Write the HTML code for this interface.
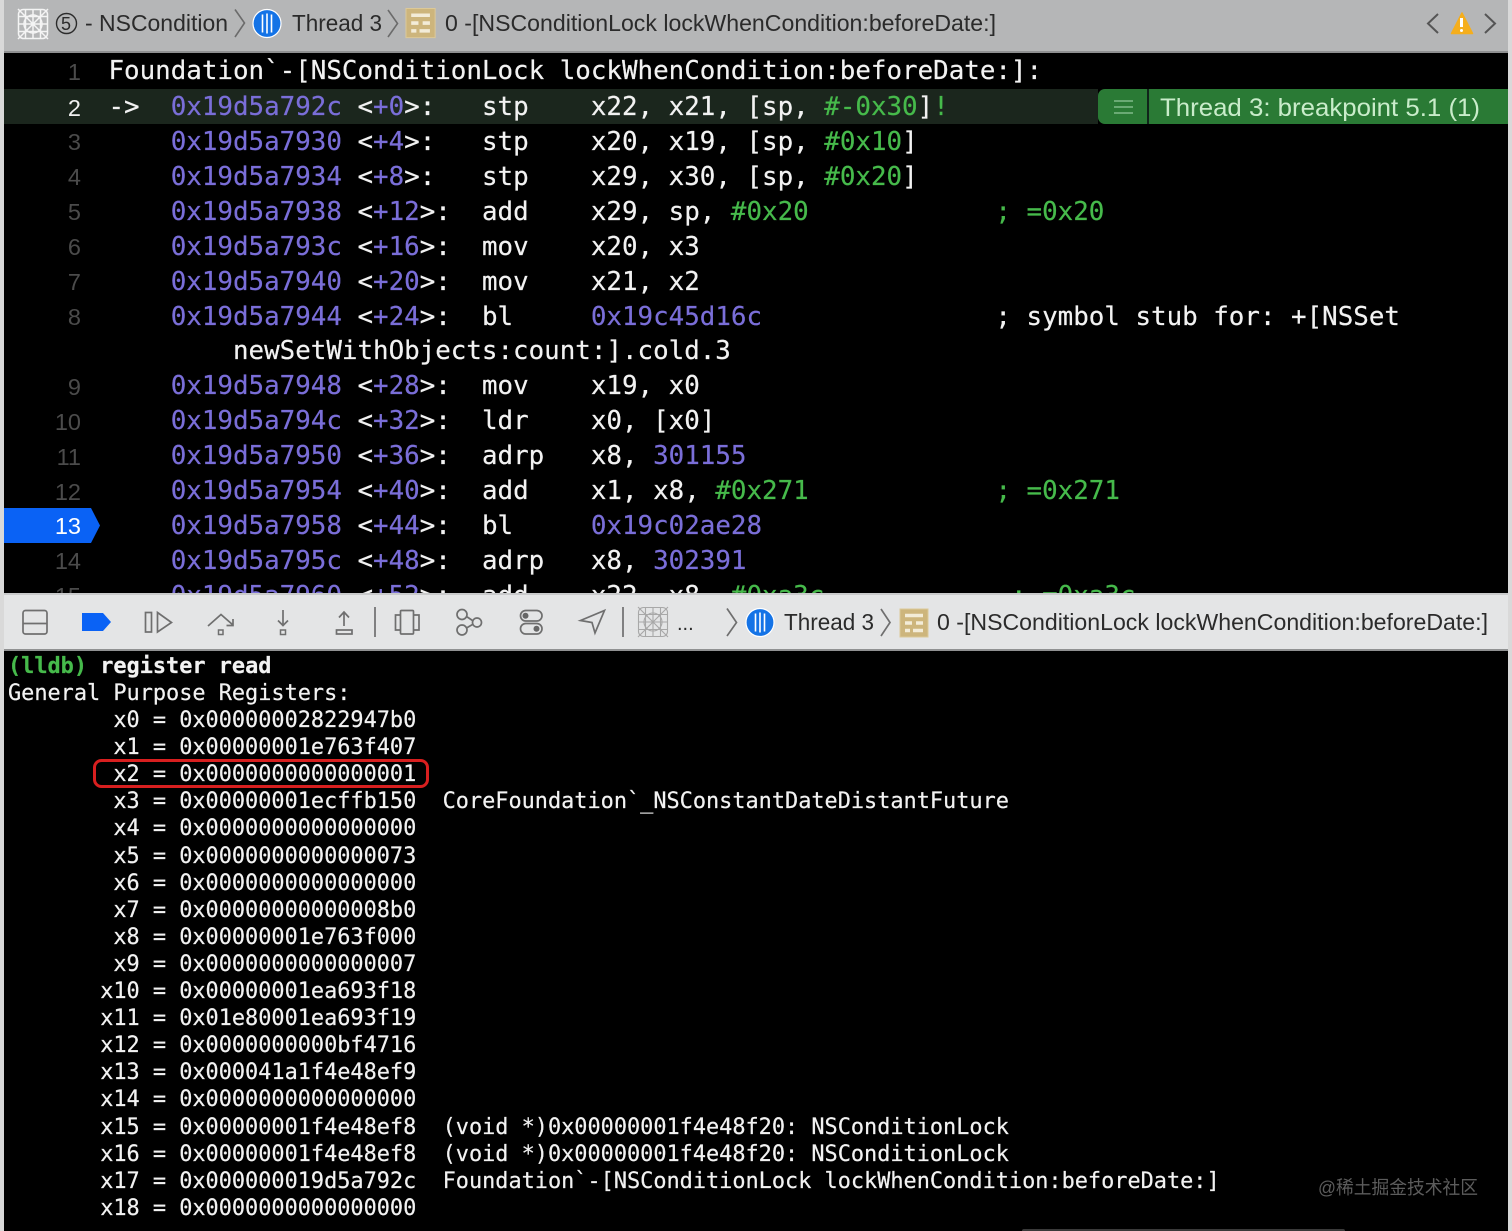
<!DOCTYPE html>
<html><head><meta charset="utf-8"><style>
html,body{margin:0;padding:0;background:#000}
#p{position:relative;width:1512px;height:1231px;overflow:hidden;background:#000}
.c{position:absolute;white-space:pre;font-family:"DejaVu Sans Mono","Liberation Mono",monospace;color:#f2f2f2;-webkit-text-stroke:.2px currentColor}
.d{left:108.5px;font-size:25.85px;line-height:34px;height:34px}
.t{left:8px;font-size:21.89px;line-height:27px;height:27px}
.n{position:absolute;width:81px;left:0;text-align:right;font:23.5px/34px "Liberation Sans",sans-serif;color:#4b4b4b}
i{font-style:normal}
.a{color:#7a6ed8}.g{color:#46ba4b}.w{color:#f2f2f2}
b{font-weight:bold}
svg{position:absolute;left:0;top:0}
svg text{font-family:"Liberation Sans","Noto Sans CJK SC",sans-serif}
</style></head><body><div id="p">
<div style="position:absolute;left:0;top:0;width:1512px;height:51px;background:#b5b6b7"></div>
<div style="position:absolute;left:0;top:51px;width:1512px;height:2px;background:#8f9091"></div>
<div style="position:absolute;left:4px;top:89px;width:1094px;height:35px;background:#1b261d"></div>
<div style="position:absolute;left:1098px;top:89px;width:49px;height:35px;background:#2a7a35;border-radius:7px 0 0 7px"></div>
<div style="position:absolute;left:1149px;top:89px;width:359px;height:35px;background:#2a7a35"></div>

<div class="n" style="top:55px">1</div>
<div class="n" style="top:91px;color:#f0f0f0">2</div>
<div class="n" style="top:125px">3</div>
<div class="n" style="top:160px">4</div>
<div class="n" style="top:195px">5</div>
<div class="n" style="top:230px">6</div>
<div class="n" style="top:265px">7</div>
<div class="n" style="top:300px">8</div>
<div class="n" style="top:370px">9</div>
<div class="n" style="top:405px">10</div>
<div class="n" style="top:440px">11</div>
<div class="n" style="top:475px">12</div>
<svg width="110" height="560" style="left:0;top:0"><polygon points="4,508 91,508 100,525.5 91,543 4,543" fill="#0a62f5"/></svg>
<div class="n" style="top:509px;color:#fff">13</div>
<div class="n" style="top:544px">14</div>
<div class="n" style="top:579px">15</div>

<div class="c d" style="top:54px">Foundation`-[NSConditionLock lockWhenCondition:beforeDate:]:</div>
<div class="c d" style="top:90px">-&gt;  <i class="a">0x19d5a792c</i> &lt;<i class="a">+0</i>&gt;:   stp    x22, x21, [sp, <i class="g">#-0x30</i>]<i class="g">!</i></div>
<div class="c d" style="top:125px">    <i class="a">0x19d5a7930</i> &lt;<i class="a">+4</i>&gt;:   stp    x20, x19, [sp, <i class="g">#0x10</i>]</div>
<div class="c d" style="top:160px">    <i class="a">0x19d5a7934</i> &lt;<i class="a">+8</i>&gt;:   stp    x29, x30, [sp, <i class="g">#0x20</i>]</div>
<div class="c d" style="top:195px">    <i class="a">0x19d5a7938</i> &lt;<i class="a">+12</i>&gt;:  add    x29, sp, <i class="g">#0x20</i>            <i class="g">; =0x20</i></div>
<div class="c d" style="top:230px">    <i class="a">0x19d5a793c</i> &lt;<i class="a">+16</i>&gt;:  mov    x20, x3</div>
<div class="c d" style="top:265px">    <i class="a">0x19d5a7940</i> &lt;<i class="a">+20</i>&gt;:  mov    x21, x2</div>
<div class="c d" style="top:300px">    <i class="a">0x19d5a7944</i> &lt;<i class="a">+24</i>&gt;:  bl     <i class="a">0x19c45d16c</i>               ; symbol stub for: +[NSSet</div>
<div class="c d" style="top:334px">        newSetWithObjects:count:].cold.3</div>
<div class="c d" style="top:369px">    <i class="a">0x19d5a7948</i> &lt;<i class="a">+28</i>&gt;:  mov    x19, x0</div>
<div class="c d" style="top:404px">    <i class="a">0x19d5a794c</i> &lt;<i class="a">+32</i>&gt;:  ldr    x0, [x0]</div>
<div class="c d" style="top:439px">    <i class="a">0x19d5a7950</i> &lt;<i class="a">+36</i>&gt;:  adrp   x8, <i class="a">301155</i></div>
<div class="c d" style="top:474px">    <i class="a">0x19d5a7954</i> &lt;<i class="a">+40</i>&gt;:  add    x1, x8, <i class="g">#0x271</i>            <i class="g">; =0x271</i></div>
<div class="c d" style="top:509px">    <i class="a">0x19d5a7958</i> &lt;<i class="a">+44</i>&gt;:  bl     <i class="a">0x19c02ae28</i></div>
<div class="c d" style="top:544px">    <i class="a">0x19d5a795c</i> &lt;<i class="a">+48</i>&gt;:  adrp   x8, <i class="a">302391</i></div>
<div class="c d" style="top:579px">    <i class="a">0x19d5a7960</i> &lt;<i class="a">+52</i>&gt;:  add    x22, x8, <i class="g">#0xa3c</i>            <i class="g">; =0xa3c</i></div>

<div style="position:absolute;left:0;top:593px;width:1512px;height:58px;background:#e4e5e6;border-top:2px solid #c9cacb;box-sizing:border-box;border-bottom:2px solid #909192"></div>

<div class="c t" style="top:653px"><b class="g">(lldb)</b> <b>register read</b></div>
<div class="c t" style="top:680px">General Purpose Registers:</div>
<div class="c t" style="top:707px">        x0 = 0x00000002822947b0</div>
<div class="c t" style="top:734px">        x1 = 0x00000001e763f407</div>
<div class="c t" style="top:761px">        x2 = 0x0000000000000001</div>
<div class="c t" style="top:788px">        x3 = 0x00000001ecffb150  CoreFoundation`_NSConstantDateDistantFuture</div>
<div class="c t" style="top:815px">        x4 = 0x0000000000000000</div>
<div class="c t" style="top:843px">        x5 = 0x0000000000000073</div>
<div class="c t" style="top:870px">        x6 = 0x0000000000000000</div>
<div class="c t" style="top:897px">        x7 = 0x00000000000008b0</div>
<div class="c t" style="top:924px">        x8 = 0x00000001e763f000</div>
<div class="c t" style="top:951px">        x9 = 0x0000000000000007</div>
<div class="c t" style="top:978px">       x10 = 0x00000001ea693f18</div>
<div class="c t" style="top:1005px">       x11 = 0x01e80001ea693f19</div>
<div class="c t" style="top:1032px">       x12 = 0x0000000000bf4716</div>
<div class="c t" style="top:1059px">       x13 = 0x000041a1f4e48ef9</div>
<div class="c t" style="top:1086px">       x14 = 0x0000000000000000</div>
<div class="c t" style="top:1114px">       x15 = 0x00000001f4e48ef8  (void *)0x00000001f4e48f20: NSConditionLock</div>
<div class="c t" style="top:1141px">       x16 = 0x00000001f4e48ef8  (void *)0x00000001f4e48f20: NSConditionLock</div>
<div class="c t" style="top:1168px">       x17 = 0x000000019d5a792c  Foundation`-[NSConditionLock lockWhenCondition:beforeDate:]</div>
<div class="c t" style="top:1195px">       x18 = 0x0000000000000000</div>

<svg width="1512" height="1231" viewBox="0 0 1512 1231">
<defs>
<g id="grid" fill="none">
<rect x="0.5" y="0.5" width="29" height="29" rx="5"/>
<path d="M0 7.5H30M0 15H30M0 22.5H30M7.5 0V30M15 0V30M22.5 0V30M0 0L30 30M30 0L0 30"/>
<circle cx="15" cy="15" r="9"/>
</g>
<g id="th"><circle r="14" fill="#1473e6" stroke="#fff" stroke-width="1.2"/><path d="M-4.5-9V9M0-10V10M4.5-9V9" stroke="#fff" stroke-width="1.6" fill="none"/></g>
<g id="fr"><rect x="0" y="0" width="28" height="28" fill="#cdb57c" stroke="#dcc998"/><path d="M5 6.500H23M5 14H12M16 14H23M5 21.500H10M13 21.500H23" stroke="#f3ecd8" stroke-width="3.400" fill="none"/></g>
</defs>

<use href="#grid" x="18" y="9" stroke="#f4f4f4" stroke-width="1.500"/>
<circle cx="66.500" cy="23.500" r="10" fill="none" stroke="#2b2b2b" stroke-width="1.400"/>
<text x="61" y="30" font-size="18" fill="#2b2b2b">5</text>
<text x="85" y="31" font-size="23" fill="#2b2b2b" textLength="143" lengthAdjust="spacingAndGlyphs">- NSCondition</text>
<path d="M235 9.500L244.500 23L235 37" fill="none" stroke="#6b6b6b" stroke-width="1.600"/>
<use href="#th" x="267" y="23.500"/>
<text x="292" y="31" font-size="23" fill="#2b2b2b" textLength="90" lengthAdjust="spacingAndGlyphs">Thread 3</text>
<path d="M388 10L397.500 23.500L388 37" fill="none" stroke="#6b6b6b" stroke-width="1.600"/>
<use href="#fr" transform="translate(406 8.500) scale(1.040)"/>
<text x="445" y="31" font-size="23" fill="#2b2b2b" textLength="551" lengthAdjust="spacingAndGlyphs">0 -[NSConditionLock lockWhenCondition:beforeDate:]</text>
<path d="M1438 14L1428 23.500L1438 33" fill="none" stroke="#555" stroke-width="2"/>
<path d="M1485 14L1495 23.500L1485 33" fill="none" stroke="#555" stroke-width="2"/>
<path d="M1462 13L1472.500 33.500H1451.500Z" fill="#f5ae1c" stroke="#f5ae1c" stroke-width="1.500" stroke-linejoin="round"/>
<path d="M1461.500 18V27" stroke="#fff" stroke-width="3"/><circle cx="1461.500" cy="30.500" r="1.500" fill="#fff"/>

<path d="M1114 101H1133M1114 107H1133M1114 113H1133" stroke="#7fb98a" stroke-width="1.600"/>
<rect x="1147" y="89" width="2" height="35" fill="#10241a"/>
<text x="1160" y="116" font-size="25" fill="#c9ecca" textLength="320" lengthAdjust="spacingAndGlyphs">Thread 3: breakpoint 5.1 (1)</text>

<g fill="none" stroke="#6f6f6f" stroke-width="1.700">
<rect x="23" y="610.500" width="24" height="23.500" rx="2.500"/><path d="M23 623.500H47"/>
<rect x="145.500" y="612.500" width="6" height="19.500"/><path d="M157.500 612.500L171.500 622.500L157.500 632Z"/>
<path d="M208 626L221 614.500L233 625M233 619V625.500H226.500"/><rect x="218.500" y="630" width="4.500" height="4.500" stroke-width="1.500"/>
<path d="M283 610V625M278 620.500L283 625.500L288 620.500"/><rect x="280.500" y="630" width="5" height="4.500" stroke-width="1.500"/>
<path d="M344 626V612M339 617.500L344 612L349 617.500"/><rect x="336.500" y="630" width="15.500" height="4"/>
<path d="M375 607V637"/>
<rect x="400.500" y="610.500" width="13" height="23.500" rx="1"/><path d="M400.500 615H395.500V630H400.500M413.500 615H419V630H413.500"/>
<circle cx="462" cy="614.500" r="5"/><circle cx="477" cy="622.500" r="4.500"/><circle cx="462" cy="630" r="5"/><path d="M466.500 616.500L472.500 620.500M472.500 624.500L466.500 628"/>
<rect x="520.500" y="610.500" width="21.500" height="10.500" rx="5.250"/><rect x="520.500" y="623.500" width="21.500" height="10.500" rx="5.250"/>
<path d="M580.500 620.500L604.500 610.500L595 633L592 622.500Z"/>
<path d="M623 607V637"/>
<path d="M727 608.500L736.500 622.500L727 636M881 609L890 622.500L881 636"/>
</g>
<circle cx="525.500" cy="615.800" r="3" fill="#666"/><circle cx="536.500" cy="628.800" r="3" fill="#666"/>
<path d="M82 613H103L111 622L103 631H82Z" fill="#0a62f5"/>
<use href="#grid" x="638" y="607" stroke="#a8a8a8" stroke-width="1.100"/>
<text x="677" y="630" font-size="20" fill="#2b2b2b">...</text>
<use href="#th" x="760" y="622.500"/>
<text x="784" y="630" font-size="23" fill="#2b2b2b" textLength="90" lengthAdjust="spacingAndGlyphs">Thread 3</text>
<use href="#fr" x="900" y="609"/>
<text x="937" y="630" font-size="23" fill="#2b2b2b" textLength="551" lengthAdjust="spacingAndGlyphs">0 -[NSConditionLock lockWhenCondition:beforeDate:]</text>

<rect x="94.500" y="760.500" width="333" height="26" rx="7" fill="none" stroke="#d81f1f" stroke-width="3"/>
<text x="1318" y="1194" font-size="18.500" fill="#5c5c5c" textLength="160" lengthAdjust="spacingAndGlyphs">@稀土掘金技术社区</text>
<rect x="1022" y="1229" width="323" height="4" rx="2" fill="#3a3a3a"/>
<rect x="0" y="0" width="4" height="1231" fill="#d9d9d9"/>
<rect x="1508" y="0" width="4" height="1231" fill="#d9d9d9"/>
</svg>
</div></body></html>
